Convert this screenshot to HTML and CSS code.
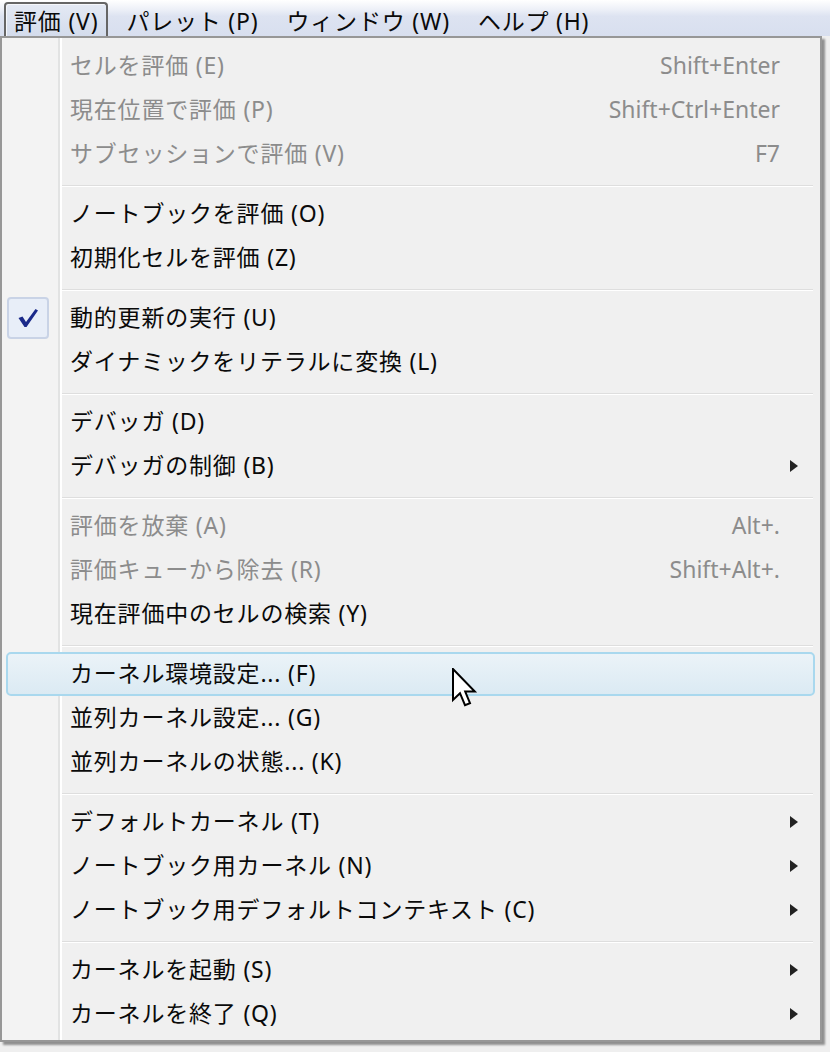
FILE: index.html
```html
<!DOCTYPE html>
<html lang="ja">
<head>
    <meta charset="UTF-8">
    <title>評価メニュー</title>
    <link rel="stylesheet" href="styles.css">
</head>
<body>
    <div class="menubar">
        <span class="top-item active">評価 (V)</span>
        <span class="top-item">パレット (P)</span>
        <span class="top-item">ウィンドウ (W)</span>
        <span class="top-item">ヘルプ (H)</span>
    </div>

    <div class="menu">
        <div class="item disabled"><span class="mark"></span><span class="label">セルを評価 (E)</span><span class="shortcut">Shift+Enter</span><span class="sub"></span></div>
        <div class="item disabled"><span class="mark"></span><span class="label">現在位置で評価 (P)</span><span class="shortcut">Shift+Ctrl+Enter</span><span class="sub"></span></div>
        <div class="item disabled"><span class="mark"></span><span class="label">サブセッションで評価 (V)</span><span class="shortcut">F7</span><span class="sub"></span></div>
        <div class="sep"></div>
        <div class="item"><span class="mark"></span><span class="label">ノートブックを評価 (O)</span><span class="sub"></span></div>
        <div class="item"><span class="mark"></span><span class="label">初期化セルを評価 (Z)</span><span class="sub"></span></div>
        <div class="sep"></div>
        <div class="item"><span class="mark"><span class="check">
            <svg width="22" height="20" viewBox="0 0 22 20"><path d="M1.5 10 L5.5 8.5 L9 14 L18.5 1 L21 2.5 L9.5 19 L7.5 19 Z" fill="#1b2a8a"/></svg>
        </span></span><span class="label">動的更新の実行 (U)</span><span class="sub"></span></div>
        <div class="item"><span class="mark"></span><span class="label">ダイナミックをリテラルに変換 (L)</span><span class="sub"></span></div>
        <div class="sep"></div>
        <div class="item"><span class="mark"></span><span class="label">デバッガ (D)</span><span class="sub"></span></div>
        <div class="item"><span class="mark"></span><span class="label">デバッガの制御 (B)</span><span class="sub"><i class="arrow"></i></span></div>
        <div class="sep"></div>
        <div class="item disabled"><span class="mark"></span><span class="label">評価を放棄 (A)</span><span class="shortcut">Alt+.</span><span class="sub"></span></div>
        <div class="item disabled"><span class="mark"></span><span class="label">評価キューから除去 (R)</span><span class="shortcut">Shift+Alt+.</span><span class="sub"></span></div>
        <div class="item"><span class="mark"></span><span class="label">現在評価中のセルの検索 (Y)</span><span class="sub"></span></div>
        <div class="sep"></div>
        <div class="item hover"><span class="mark"></span><span class="label">カーネル環境設定... (F)</span><span class="sub"></span>
            <svg class="cursor" width="26" height="40" viewBox="0 0 13 20"><path d="M0.5 0.5 L0.5 16 L4 12.6 L6.5 18.6 L9 17.6 L6.6 11.8 L11.4 11.8 Z" fill="#fff" stroke="#000" stroke-width="1" stroke-linejoin="miter"/></svg>
        </div>
        <div class="item"><span class="mark"></span><span class="label">並列カーネル設定... (G)</span><span class="sub"></span></div>
        <div class="item"><span class="mark"></span><span class="label">並列カーネルの状態... (K)</span><span class="sub"></span></div>
        <div class="sep"></div>
        <div class="item"><span class="mark"></span><span class="label">デフォルトカーネル (T)</span><span class="sub"><i class="arrow"></i></span></div>
        <div class="item"><span class="mark"></span><span class="label">ノートブック用カーネル (N)</span><span class="sub"><i class="arrow"></i></span></div>
        <div class="item"><span class="mark"></span><span class="label">ノートブック用デフォルトコンテキスト (C)</span><span class="sub"><i class="arrow"></i></span></div>
        <div class="sep"></div>
        <div class="item"><span class="mark"></span><span class="label">カーネルを起動 (S)</span><span class="sub"><i class="arrow"></i></span></div>
        <div class="item"><span class="mark"></span><span class="label">カーネルを終了 (Q)</span><span class="sub"><i class="arrow"></i></span></div>
    </div>
</body>
</html>
```

FILE: styles.css
```css
body {
    margin: 0;
    width: 830px;
    height: 1052px;
    overflow: hidden;
    background-color: #efefef;
    font-family: "Noto Sans", "Noto Sans CJK JP", sans-serif;
    font-size: 23px;
    color: #0a0a0a;
}
.menubar {
    height: 36px;
    display: flex;
    align-items: stretch;
    gap: 8px;
    padding: 2px 0 0 4px;
    box-sizing: border-box;
    background: linear-gradient(#ffffff 0, #eef1f8 25%, #dde3f1 45%, #d8dfef 100%);
}
.top-item {
    display: flex;
    align-items: center;
    padding: 0 8px;
    letter-spacing: 0.8px;
    border: 2px solid transparent;
    border-bottom: none;
    border-radius: 4px 4px 0 0;
}
.top-item.active {
    border-color: #666;
    background: linear-gradient(#e4e9f4, #d4dcec);
    box-shadow: inset 1px 1px 0 #f5f7fb;
}
.menu {
    position: relative;
    width: 822px;
    box-sizing: border-box;
    border: 2px solid #979797;
    padding: 6px 5px 4px 4px;
    background: linear-gradient(to right, #f3f3f3 0, #f3f3f3 56px, #e2e3e3 56px, #e2e3e3 58px, #ffffff 58px, #ffffff 60px, #f0f0f0 60px);
    box-shadow: 3px 3px 2px rgba(0, 0, 0, 0.4);
}
.item {
    position: relative;
    display: flex;
    align-items: center;
    height: 44px;
    box-sizing: border-box;
    border: 2px solid transparent;
    border-radius: 5px;
    line-height: 1.2;
}
.item.disabled {
    color: #8c8c8c;
}
.item.hover {
    border-color: #a9d8ee;
    background: linear-gradient(#ebf3f8, #dbeaf3);
}
.mark {
    width: 62px;
    height: 100%;
    display: flex;
    align-items: center;
    flex-shrink: 0;
}
.check {
    width: 38px;
    height: 38px;
    margin-left: -1px;
    border: 2px solid #c9d3e6;
    border-radius: 4px;
    background: #e8eef8;
    display: flex;
    align-items: center;
    justify-content: center;
}
.label {
    letter-spacing: 0.8px;
    white-space: nowrap;
}
.shortcut {
    margin-left: auto;
    white-space: nowrap;
}
.sub {
    width: 33px;
    height: 100%;
    flex-shrink: 0;
    display: flex;
    align-items: center;
    margin-left: auto;
}
.shortcut + .sub {
    margin-left: 0;
}
.arrow {
    display: block;
    margin-left: 10px;
    width: 0;
    height: 0;
    border-top: 6px solid transparent;
    border-bottom: 6px solid transparent;
    border-left: 8px solid #222;
}
.sep {
    margin: 9px 2px 5px 56px;
    border-top: 1px solid #dedede;
    border-bottom: 1px solid #ffffff;
}
.cursor {
    position: absolute;
    left: 444px;
    top: 14px;
}
```
